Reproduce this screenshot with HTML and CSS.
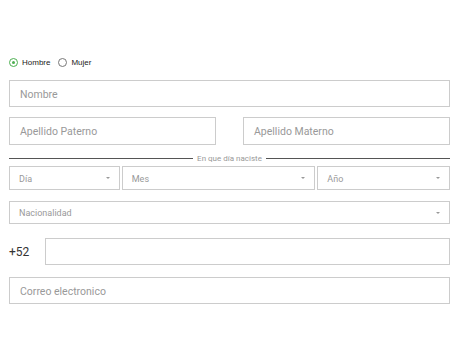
FILE: index.html
```html
<!DOCTYPE html>
<html lang="es">
<head>
    <meta charset="UTF-8">
    <title>Registro</title>
    <link rel="stylesheet" href="styles.css">
</head>
<body>
<form class="form">
    <div class="gender">
        <label class="radio"><span class="dot checked"></span>Hombre</label>
        <label class="radio"><span class="dot"></span>Mujer</label>
    </div>

    <div class="field">Nombre</div>

    <div class="row two">
        <div class="field">Apellido Paterno</div>
        <div class="field">Apellido Materno</div>
    </div>

    <div class="divider"><span>En que día naciste</span></div>

    <div class="row dates">
        <div class="select">Día<i class="arrow"></i></div>
        <div class="select">Mes<i class="arrow"></i></div>
        <div class="select">Año<i class="arrow"></i></div>
    </div>

    <div class="select wide">Nacionalidad<i class="arrow"></i></div>

    <div class="phone">
        <span class="code">+52</span>
        <div class="field"></div>
    </div>

    <div class="field">Correo electronico</div>
</form>
</body>
</html>
```

FILE: styles.css
```css
body {
    margin: 0;
    background: #fff;
    font-family: Roboto, "Liberation Sans", sans-serif;
}

.form {
    width: 441px;
    margin-left: 9px;
    padding-top: 56px;
}

.gender {
    display: flex;
    align-items: center;
    height: 12px;
    font-family: "Liberation Sans", Arial, sans-serif;
    font-size: 8px;
    color: #222;
}
.radio {
    display: flex;
    align-items: center;
    margin-right: 8px;
}
.dot {
    width: 7px;
    height: 7px;
    border: 1px solid #777;
    border-radius: 50%;
    margin-right: 4px;
    box-sizing: content-box;
    position: relative;
}
.dot.checked {
    border-color: #4caf50;
}
.dot.checked::after {
    content: "";
    position: absolute;
    left: 2px;
    top: 2px;
    width: 3px;
    height: 3px;
    border-radius: 50%;
    background: #4caf50;
}

.field {
    height: 27px;
    line-height: 27px;
    border: 1px solid #ccc;
    box-sizing: border-box;
    padding-left: 10px;
    font-size: 10.5px;
    color: #999;
    margin-top: 12px;
}

.row {
    display: flex;
}
.two {
    justify-content: space-between;
    margin-top: 10px;
}
.two .field {
    width: 207px;
    height: 28px;
    line-height: 28px;
    margin-top: 0;
}

.divider {
    display: flex;
    align-items: center;
    height: 10px;
    margin-top: 8px;
    font-size: 8px;
    color: #999;
}
.divider::before,
.divider::after {
    content: "";
    flex: 1;
    border-top: 1px solid #555;
}
.divider span {
    padding: 0 4px;
}

.dates {
    margin-top: 3px;
    gap: 2px;
}
.select {
    position: relative;
    height: 24px;
    line-height: 24px;
    border: 1px solid #ccc;
    box-sizing: border-box;
    padding-left: 9px;
    font-size: 9px;
    color: #999;
}
.dates .select:nth-child(1) { width: 111px; }
.dates .select:nth-child(2) { width: 194px; }
.dates .select:nth-child(3) { width: 133px; }

.arrow {
    position: absolute;
    right: 9px;
    top: 10px;
    border-left: 2px solid transparent;
    border-right: 2px solid transparent;
    border-top: 2px solid #999;
}

.wide {
    height: 23px;
    line-height: 23px;
    margin-top: 11px;
}

.phone {
    display: flex;
    align-items: center;
    margin-top: 14px;
}
.phone .code {
    width: 36px;
    font-size: 12px;
    color: #333;
}
.phone .field {
    flex: 1;
    height: 27px;
    margin-top: 0;
}
```
